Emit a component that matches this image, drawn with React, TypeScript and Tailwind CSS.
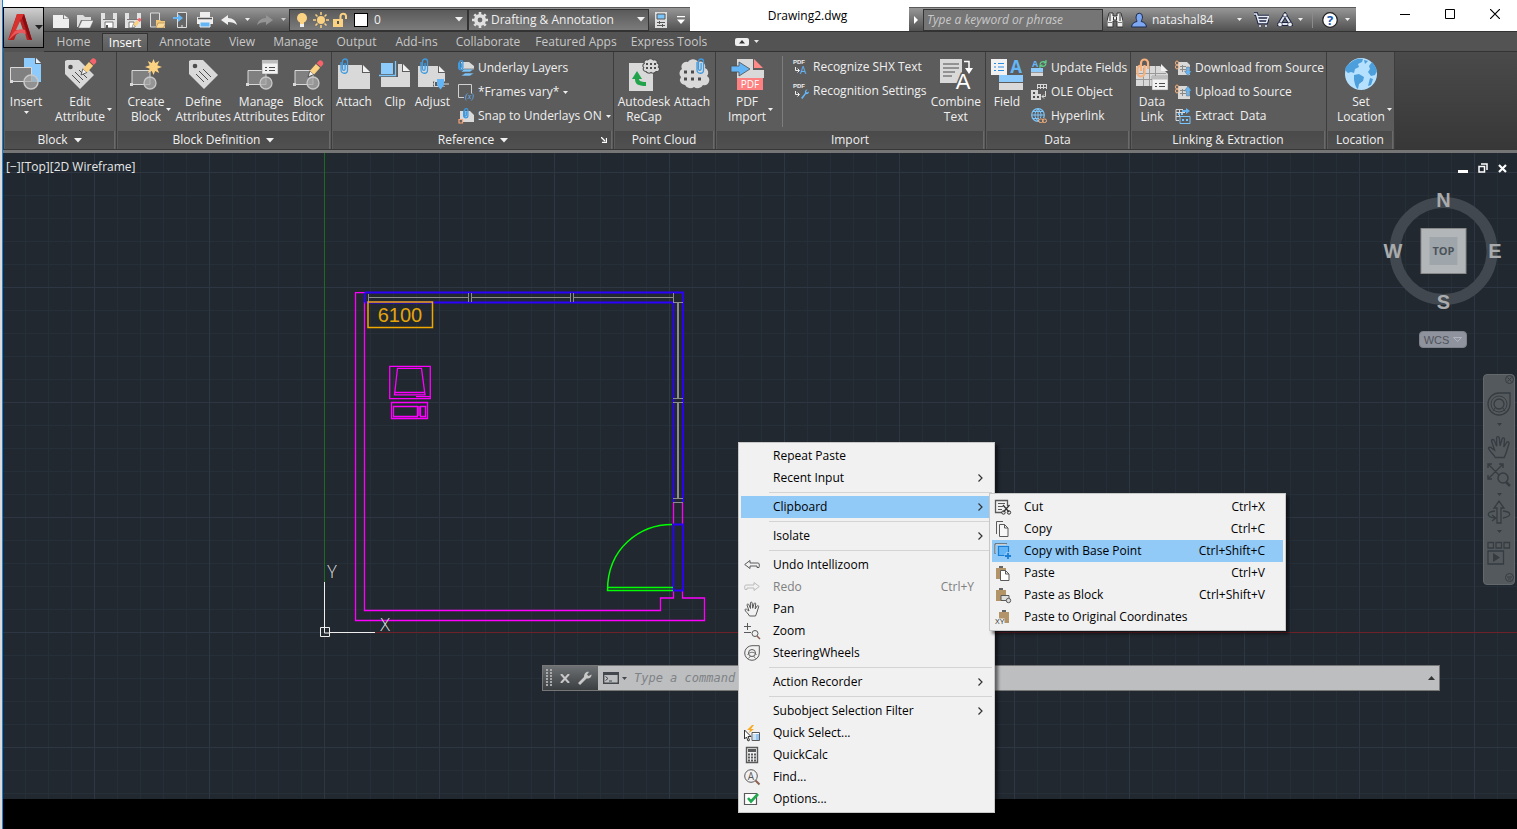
import React from "react";

type Kids = { children?: React.ReactNode };

function Svg({ w, h, children, className = "" }: { w: number; h: number; className?: string } & Kids) {
  return (
    <svg width={w} height={h} viewBox={`0 0 ${w} ${h}`} fill="none" aria-hidden="true" className={`block shrink-0 ${className}`}>
      {children}
    </svg>
  );
}

function Caret({ big = false, className = "" }: { big?: boolean; className?: string }) {
  return big ? (
    <Svg w={8} h={5} className={className}><path d="M0 0h8L4 4.5z" fill="currentColor" /></Svg>
  ) : (
    <Svg w={5} h={3} className={className}><path d="M0 0h5L2.500 3z" fill="currentColor" /></Svg>
  );
}

/* ---------- shared drawing parts ---------- */

const L = "#d9d9d9";
const D = "#4d4d4d";
const B = "#7cc5fb";

function Pencil({ x, y, s = 1 }: { x: number; y: number; s?: number }) {
  return (
    <g transform={`translate(${x} ${y}) rotate(42) scale(${s})`}>
      <path d="M0 0L-2.800-6h5.600z" fill="#f2f2f2" stroke={D} strokeWidth=".8" />
      <path d="M-2.800-6h5.600v-9h-5.600z" fill="#fbd182" />
      <path d="M-2.800-16h5.600v-2.500a2.800 2.800 0 0 0-5.600 0z" fill="#f7636a" />
    </g>
  );
}

function Clip({ x, y, s = 1 }: { x: number; y: number; s?: number }) {
  return (
    <path
      transform={`translate(${x} ${y}) scale(${s})`}
      d="M1 4v8a3.200 3.200 0 0 0 6.500 0V3.500a2.500 2.500 0 0 0-5 0V11a1.300 1.300 0 0 0 2.600 0V5"
      stroke="#3f9ae0"
      strokeWidth={1.3 / s}
    />
  );
}

function Shape() {
  return (
    <>
      <path d="M2 12.500h18v14H2z" fill="#808080" stroke={L} />
      <circle cx="20" cy="25" r="6" fill="#a8a8a8" fillOpacity=".75" stroke="#c8c8c8" strokeWidth="1.300" />
      <path d="M0 25h3v3H0z" fill={L} />
    </>
  );
}

const tagPath = "M1 3l2-1h12l15 15-14 14L1 16z";
const cloud = "M5 11a5 5 0 0 1 6-7 6 6 0 0 1 10 0 5 5 0 0 1 7 6 5 5 0 0 1 2 8 5 5 0 0 1-4 9 6 6 0 0 1-9 2 6 6 0 0 1-9-2 5 5 0 0 1-4-8 5 5 0 0 1 1-8z";
const handPath =
  "M5.500 15C4 12 1.200 10.500 1 8.800c0-1 1.500-1 2.200 0L5 10 3 4c0-1.300 1.500-1.300 1.900-.2L6.500 7.500 6.400 2c0-1.200 1.700-1.200 1.800 0L8.700 7.200l1.400-4.700c.4-1 1.800-.7 1.600.4L11.200 8l1.900-3c.6-.9 1.900-.3 1.600.7L12.700 12 11.500 15z";

function WindowList({ x, y, w = 16, h = 14 }: { x: number; y: number; w?: number; h?: number }) {
  return (
    <g transform={`translate(${x} ${y})`}>
      <path d={`M0 0h${w}v${h}H0z`} fill="#f2f2f2" stroke="#777" strokeWidth=".5" />
      <path d={`M0 0h${w}v3.500H0z`} fill="#bdbdbd" />
      <path d="M3 7.500h2M3 10.500h2M7 7.500h6M7 10.500h6" stroke={D} />
    </g>
  );
}

/* ---------- large ribbon icons (32 x 32) ---------- */

const big: Record<string, React.ReactNode> = {
  insert: (
    <>
      <path d="M14 0h11v6h6v18H14z" fill="#8ccbfb" />
      <path d="M26 0l5 5h-5z" fill="#e8f4ff" />
      <path d="M.500 9.500h21v14H.500z" fill="#808080" stroke={L} />
      <circle cx="21" cy="24" r="7" fill="#a8a8a8" fillOpacity=".7" stroke="#c8c8c8" strokeWidth="1.500" />
      <path d="M0 22h3v3H0z" fill={L} />
    </>
  ),
  editAttr: (
    <>
      <path d={tagPath} fill={L} />
      <circle cx="6.500" cy="9" r="2.300" fill={D} />
      <path d="M8 17l8 8M11 14l8 8M15 12l8 8" stroke={D} />
      <Pencil x={17} y={17} />
    </>
  ),
  create: (
    <>
      <Shape />
      <path d="M23.500 1l1.700 4 4-2-1.900 4.200 4.700 1.800-4.700 1.800 1.900 4.200-4-2-1.700 4-1.700-4-4 2 1.900-4.200L15 9l4.700-1.800L17.800 3l4 2z" fill="#fbd182" />
    </>
  ),
  define: (
    <>
      <path d={tagPath} fill={L} />
      <circle cx="7" cy="8" r="2.300" fill={D} />
      <path d="M8 16l8 8M11 13l9 9M15 11l8 8" stroke={D} />
    </>
  ),
  manage: (
    <>
      <Shape />
      <WindowList x={16} y={2} />
    </>
  ),
  editor: (
    <>
      <Shape />
      <Pencil x={15} y={19} />
    </>
  ),
  attach: (
    <>
      <path d="M0 7h24v8h8v16H0z" fill={L} />
      <path d="M25 7l7 7h-7z" fill="#f2f2f2" />
      <Clip x={2} y={0} s={1} />
    </>
  ),
  clip: (
    <>
      <path d="M2 6h21v8h8v15H2z" fill={L} />
      <path d="M24 6l7 7h-7z" fill="#f2f2f2" />
      <path d="M-1 3h20v16H-1z" fill="#5c5c5c" />
      <path d="M2 5h12v11H2z" fill="#8ccbfb" />
      <path d="M0 17.500h16.500V3" stroke={B} strokeWidth="1.300" />
    </>
  ),
  adjust: (
    <>
      <path d="M1 8h20v7h7v14H1z" fill={L} />
      <path d="M22 8l6 6h-6z" fill="#f2f2f2" />
      <Clip x={3} y={0} s={1} />
      <path d="M16 26h16" stroke="#5c5c5c" strokeWidth="5" />
      <path d="M16 26h16" stroke={L} />
      <path d="M17.500 23.500h4v5h-4z" fill="#5c5c5c" stroke={L} />
      <path d="M20 21h7v6l-3.500 4.500L20 27z" fill="#64b5f6" />
    </>
  ),
  recap: (
    <>
      <path d="M1 5h24v28H1z" fill={L} />
      <path d="M9 13l-5 8h3c0 5 3 7 11 7v-4c-5 0-7-1-7-3h3z" fill="#21a34c" />
      <g transform="translate(13.500 0) scale(.56 .5)"><path d={cloud} fill={L} stroke={D} strokeWidth="2" /></g>
      <path d="M18 6h2M22 6h2M26 6h2M18 10h2M22 10h2M26 10h2" stroke={D} strokeWidth="2" />
    </>
  ),
  cloud: (
    <>
      <path d={cloud} fill={L} />
      <path d="M7 14h3M14 14h3M7 21h3M14 21h3M21 21h3" stroke={D} strokeWidth="3" />
      <Clip x={19} y={0} s={1} />
    </>
  ),
  pdf: (
    <>
      <path d="M6 1h16v11h11v8H6z" fill={L} />
      <path d="M23 1l9 9h-9z" fill="#ff8a8a" />
      <path d="M0 8h8V4l11 7-11 7v-4H0z" fill="#64b5f6" stroke={D} strokeWidth=".8" />
      <path d="M6 20h26v12H6z" fill="#ff8080" />
      <text x="19" y="30" textAnchor="middle" fill="#fff" fontSize="10" className="font-['Open_Sans']">PDF</text>
    </>
  ),
  combine: (
    <>
      <path d="M0 1h22v24H0z" fill={L} />
      <path d="M3 6h16M3 10h16M3 14h12M3 18h9" stroke={D} />
      <path d="M24 3.500h5V10" stroke="#fff" strokeWidth="1.500" />
      <path d="M25 10h8l-4 6z" fill="#fff" />
      <text x="23" y="31" textAnchor="middle" fill="#fff" stroke="#5c5c5c" strokeWidth="3" paintOrder="stroke" fontSize="22" className="font-['Liberation_Sans']">A</text>
    </>
  ),
  field: (
    <>
      <path d="M0 1h16v16H0z" fill="#f2f2f2" />
      <path d="M3 5.500h2M3 9h2M3 12.500h2M7 5.500h6M7 9h6M7 12.500h6" stroke="#2a8be0" />
      <path d="M8 17h24v7H8z" fill="#8ccbfb" />
      <path d="M8 25h24v7H8z" fill={L} />
      <text x="25" y="15" textAnchor="middle" fill="#64b5f6" fontSize="17" fontWeight="700" className="font-['Open_Sans']">A</text>
    </>
  ),
  dataLink: (
    <>
      <path d="M0 8h24l8 8v12H0z" fill={L} />
      <path d="M25 6l7 7h-7z" fill="#f2f2f2" />
      <path d="M0 15.500h30M0 21.500h30M7.500 10v18M13.500 8v20M19.500 8v12" stroke="#999" />
      <path d="M5 13V5a3.500 3.500 0 0 1 7 0v6M1.500 9.500V15a3.500 3.500 0 0 0 7 0V7M5 7.500C2.500 8 1.500 9 1.500 11" stroke="#f7b27e" strokeWidth="2.200" />
      <WindowList x={16} y={18} />
    </>
  ),
  globe: (
    <>
      <circle cx="16" cy="16" r="16" fill="#b5e1ff" />
      <path d="M5 5C9 1 14 0 18 1l-1 3-4 2 1 3-4 2-1 4-3-1-3 1-3-3c0-3 2-5 5-7z" fill="#4d9fdc" />
      <path d="M9 17l5-1 5 3-1 4-4 3-1 5c-3-2-3-6-4-9z" fill="#4d9fdc" />
      <path d="M24 8l3-4c3 3 4 6 5 9l-2 4-4 1-3-4 2-3z" fill="#4d9fdc" />
      <path d="M25 20l3 1-2 6-3 1z" fill="#4d9fdc" />
      <path d="M19 2l4 1-3 3z" fill="#4d9fdc" />
    </>
  ),
};

/* ---------- small ribbon icons (16 x 16) ---------- */

const sheet = "M3 2h9l3 3v10H3z";
const small: Record<string, React.ReactNode> = {
  layers: (
    <>
      <path d="M5 2h6l5 4v4H3V2z" fill={L} />
      <path d="M6 9h10l-4 3H3zM7 13h9l-4 3H3z" fill={B} stroke="#5c5c5c" strokeWidth=".6" />
      <Clip x={0} y={0} s={0.65} />
    </>
  ),
  frames: (
    <>
      <path d="M.500.500h13v9M.500.500v13H6" stroke="#d0d0d0" />
      <text x="7" y="15" fontSize="8" fontStyle="italic" fill="#64b5f6" className="font-['Liberation_Serif']">(x)</text>
    </>
  ),
  snap: (
    <>
      <path d="M2 3h10l4 4v7H2z" fill={L} />
      <Clip x={5} y={0} s={0.65} />
      <path d="M1 11.500h3.500v3.500H1z" fill="#5c5c5c" stroke="#f7a377" strokeWidth="1.200" />
    </>
  ),
  shx: (
    <>
      <text x="0" y="5" fontSize="6" fontWeight="700" fill="#eee" className="font-['Liberation_Sans']">PDF</text>
      <path d="M2.500 8v3.500H6M4.500 9.500l2 2-2 2" stroke="#eee" />
      <text x="7" y="15" fontSize="10" fill="#64b5f6" className="font-['Open_Sans']">A</text>
    </>
  ),
  recog: (
    <>
      <text x="0" y="5" fontSize="6" fontWeight="700" fill="#eee" className="font-['Liberation_Sans']">PDF</text>
      <path d="M2.500 8v3.500H6M4.500 9.500l2 2-2 2" stroke="#eee" />
      <path d="M8 15l4-5c-.6-2 1-4 2.500-3.500L13 8.500l1 1 2-1c0 2-1.500 3-3 2.500L9.500 16z" fill="#64b5f6" />
    </>
  ),
  update: (
    <>
      <text x="1" y="7" fontSize="9" fontWeight="700" fill="#64b5f6" className="font-['Open_Sans']">A</text>
      <path d="M9 4c1-3 5-3 6-1M15 4c-1 3-5 3-6 1M15 0v3h-2.500M9 8V5h2.500" stroke="#5fd38a" strokeWidth="1.200" />
      <path d="M0 8h12v4H0z" fill="#8ccbfb" />
      <path d="M0 12.500h12V16H0z" fill={L} />
    </>
  ),
  ole: (
    <>
      <path d="M0 6h7v10H0z" fill={L} />
      <path d="M6 10h4v6H6z" fill={L} />
      <path d="M2 9h2M2 13h2M6 13h2" stroke={D} strokeWidth="2" />
      <path d="M6 .500h10M6 3.500h10M6.500 0v5M9.500 0v5M12.500 0v5M15.500 0v5" stroke={L} />
      <path d="M14.500 7v5.500H11M13 10.500l-2 2 2 2" stroke={L} />
    </>
  ),
  hyper: (
    <>
      <circle cx="7" cy="7" r="6.300" stroke={B} strokeWidth="1.200" />
      <path d="M7 1v12M1 7h12M2 3.500h10M2 10.500h8M7 1c-4 3-4 9 0 12M7 1c4 3 4 9 0 12" stroke={B} />
      <path d="M8 10h9v6H8z" fill="#5c5c5c" />
      <rect x="7.700" y="11" width="4.500" height="3.500" rx="1.700" stroke="#f7b27e" />
      <rect x="11.500" y="11" width="4" height="3.500" rx="1.700" stroke="#f7b27e" />
    </>
  ),
  download: (
    <>
      <path d={sheet} fill={L} />
      <path d="M5 6.500h6M5 9.500h6M7.500 5v7" stroke="#888" />
      <ellipse cx="2" cy="3" rx="1.500" ry="2" stroke="#f7b27e" /><ellipse cx="2" cy="7" rx="1.500" ry="2" stroke="#f7b27e" />
      <path d="M11.500 7h3v4h2L13 16l-3.500-5h2z" fill="#64b5f6" stroke="#5c5c5c" strokeWidth=".4" />
    </>
  ),
  upload: (
    <>
      <path d={sheet} fill={L} />
      <path d="M5 6.500h5M5 9.500h6M7.500 5v7" stroke="#888" />
      <ellipse cx="2" cy="3" rx="1.500" ry="2" stroke="#f7b27e" /><ellipse cx="2" cy="7" rx="1.500" ry="2" stroke="#f7b27e" />
      <path d="M11.500 12h3V7h2L13 2 9.500 7h2z" fill="#64b5f6" stroke="#5c5c5c" strokeWidth=".4" />
    </>
  ),
  extract: (
    <>
      <path d="M1 12.500V1.500h7M1 4.500h9M1 8.500h4M4.500 2v6M1 12.500h3" stroke={L} />
      <path d="M7 2h4V0l4 3-4 3V4H7z" fill="#64b5f6" />
      <path d="M5 8.500h10v7H5z" stroke={B} />
      <path d="M3 6h2M6 6h2M7 12h2M11 12h2" stroke={B} strokeWidth="2" />
    </>
  ),
};

function BigButton({ icon, lines, width, split, below }: { icon: string; lines: string[]; width: string; split?: boolean; below?: boolean }) {
  return (
    <button type="button" className={`flex shrink-0 flex-col items-center pt-1.5 ${width}`}>
      <svg width="32" height="32" viewBox="0 0 32 32" fill="none" aria-hidden="true" className="block shrink-0 overflow-visible">{big[icon]}</svg>
      <span className="mt-1 grid w-full grid-cols-[1fr_auto_1fr] items-center leading-[15px] whitespace-nowrap">
        <span />
        <span>{lines.map((t) => <span key={t} className="block">{t}</span>)}</span>
        <span className="pl-0.5">{split && <Caret />}</span>
      </span>
      {below && <Caret className="mt-0.5" />}
    </button>
  );
}

function RowButton({ icon, label, drop }: { icon: string; label: string; drop?: boolean }) {
  return (
    <button type="button" className="flex h-6 items-center whitespace-pre">
      <svg width="16" height="16" viewBox="0 0 16 16" fill="none" aria-hidden="true" className="mr-1 block shrink-0 overflow-visible">{small[icon]}</svg>
      {label}
      {drop && <Caret className="ml-1" />}
    </button>
  );
}

function Panel({ title, width, arrow, launcher, children }: { title: string; width: string; arrow?: boolean; launcher?: boolean } & Kids) {
  return (
    <section aria-label={title} className={`flex shrink-0 flex-col border-r border-[#3d3d3d] bg-[#5c5c5c] ${width}`}>
      <div className="flex h-[79px]">{children}</div>
      <div className="mx-px flex h-[18px] items-center justify-center border-r border-[#6a6a6a] bg-linear-to-b from-[#4a4a4a] to-[#505050]">
        {launcher && <span className="w-3" />}
        <button type="button" className="flex flex-1 items-center justify-center gap-1.5">
          {title}
          {arrow && <Caret big />}
        </button>
        {launcher && (
          <button type="button" aria-label={`${title} settings`} className="w-2.5">
            <Svg w={6} h={6}><path d="M0 0l4 4M5.500 1v4.500H1" stroke="#fff" strokeWidth="1.300" /></Svg>
          </button>
        )}
      </div>
    </section>
  );
}

function Ribbon() {
  return (
    <div className="flex border-b-[3px] border-[#757575] bg-linear-to-b from-[#4a4a4a] to-[#373737] pb-px pl-px text-[#f0f0f0]">
      <Panel title="Block" width="w-[113px]" arrow>
        <BigButton icon="insert" lines={["Insert"]} width="w-11" below />
        <BigButton icon="editAttr" lines={["Edit", "Attribute"]} width="w-16" split />
      </Panel>
      <Panel title="Block Definition" width="w-[215px]" arrow>
        <BigButton icon="create" lines={["Create", "Block"]} width="w-[58px]" split />
        <BigButton icon="define" lines={["Define", "Attributes"]} width="w-[58px]" />
        <BigButton icon="manage" lines={["Manage", "Attributes"]} width="w-[58px]" />
        <BigButton icon="editor" lines={["Block", "Editor"]} width="w-9" />
      </Panel>
      <Panel title="Reference" width="w-[282px]" arrow launcher>
        <BigButton icon="attach" lines={["Attach"]} width="w-11" />
        <BigButton icon="clip" lines={["Clip"]} width="w-[38px]" />
        <BigButton icon="adjust" lines={["Adjust"]} width="w-[38px]" />
        <div className="flex flex-col pt-1 pl-1.5">
          <RowButton icon="layers" label="Underlay Layers" />
          <RowButton icon="frames" label="*Frames vary*" drop />
          <RowButton icon="snap" label="Snap to Underlays ON" drop />
        </div>
      </Panel>
      <Panel title="Point Cloud" width="w-[102px]">
        <BigButton icon="recap" lines={["Autodesk", "ReCap"]} width="w-15" />
        <BigButton icon="cloud" lines={["Attach"]} width="w-[38px]" />
      </Panel>
      <Panel title="Import" width="w-[270px]">
        <BigButton icon="pdf" lines={["PDF", "Import"]} width="w-[62px]" split />
        <div className="my-1 ml-1 w-px bg-[#7d7d7d]" />
        <div className="flex w-[146px] flex-col pt-[3px] pl-2.5">
          <RowButton icon="shx" label="Recognize SHX Text" />
          <RowButton icon="recog" label="Recognition Settings" />
        </div>
        <BigButton icon="combine" lines={["Combine", "Text"]} width="w-[54px]" />
      </Panel>
      <Panel title="Data" width="w-[145px]">
        <BigButton icon="field" lines={["Field"]} width="w-[42px]" />
        <div className="flex flex-col pt-1 pl-[3px]">
          <RowButton icon="update" label="Update Fields" />
          <RowButton icon="ole" label="OLE Object" />
          <RowButton icon="hyper" label="Hyperlink" />
        </div>
      </Panel>
      <Panel title="Linking & Extraction" width="w-[196px]">
        <BigButton icon="dataLink" lines={["Data", "Link"]} width="w-[42px]" />
        <div className="flex flex-col pt-1 pl-0.5">
          <RowButton icon="download" label="Download from Source" />
          <RowButton icon="upload" label="Upload to Source" />
          <RowButton icon="extract" label="Extract  Data" />
        </div>
      </Panel>
      <Panel title="Location" width="w-[68px]">
        <BigButton icon="globe" lines={["Set", "Location"]} width="w-[68px]" split />
      </Panel>
    </div>
  );
}

/* ---------- title bar ---------- */

const quick: [string, React.ReactNode][] = [
  ["New", <path key="n" d="M0 3h10v4h6v9H0zM11 3l5 3.500h-5z" fill="#eee" />],
  ["Open", <g key="o"><path d="M0 3h6l2 2h6v3H4L1 15H0z" fill="#ddd" /><path d="M5 8.500h11.500L13 16H1.500z" fill="#eee" stroke="#777" strokeWidth=".5" /></g>],
  ["Save", <g key="s"><path d="M0 1h16v15H0z" fill="#e2e2e2" /><path d="M4 1h8v6H4z" fill="#888" /><path d="M2 7.500h12" stroke="#777" /><path d="M4 10h8v6H4z" fill="#fff" stroke="#777" /><path d="M5 13h2v3H5z" fill="#555" /></g>],
  ["Save As", <g key="a"><path d="M0 1h16v15H0z" fill="#e2e2e2" /><path d="M4 1h8v6H4z" fill="#888" /><path d="M2 7.500h12" stroke="#777" /><path d="M4 10h5v6H4z" fill="#fff" stroke="#777" /><Pencil x={7} y={16} s={0.6} /></g>],
  ["Open from mobile", <g key="m"><path d="M1.500 1h9v14h-9z" fill="#777" stroke="#ddd" /><path d="M7 8h4l1 1h4v7H7z" fill="#f4c777" /><path d="M9 11h8l-3 5H7z" fill="#fbd998" stroke="#6a5530" strokeWidth=".4" /></g>],
  ["Save to mobile", <g key="b"><path d="M4.500.500h9v15h-9z" fill="#666" stroke="#ddd" /><path d="M0 5h5V2l5 4-5 4V7H0z" fill="#64b5f6" /><path d="M8 14h2" stroke="#eee" /></g>],
  ["Plot", <g key="p"><path d="M3 0h10v5H3zM0 5h16v7H0z" fill="#eee" /><path d="M1 6.500h14" stroke="#555" strokeWidth="1.500" /><path d="M3 10h10v5H3z" fill="#64b5f6" stroke="#eee" /></g>],
  ["Undo", <path key="u" d="M0 8l7-5v3c5 0 8 3 9 7-2-2-5-3-9-3v3z" fill="#eee" />],
];

function IconButton({ label, className = "", children }: { label: string; className?: string } & Kids) {
  return <button type="button" aria-label={label} className={`flex shrink-0 items-center justify-center ${className}`}>{children}</button>;
}

const bar = "bg-linear-to-b from-[#979797] to-[#515151] border-t border-[#5a5a5a]";

function TitleBar() {
  return (
    <header className="flex h-[31px] items-stretch bg-white pt-[7px]">
      <div className={`flex w-[646px] shrink-0 items-center pl-[5px] text-[#f0f0f0] ${bar}`}>
        {quick.map(([name, art]) => (
          <IconButton key={name} label={name} className="h-5 w-6"><Svg w={16} h={16}>{art}</Svg></IconButton>
        ))}
        <IconButton label="Undo list" className="h-5 w-3"><Caret /></IconButton>
        <IconButton label="Redo" className="h-5 w-6">
          <Svg w={16} h={16}><path d="M16 8L9 3v3C4 6 1 9 0 13c2-2 5-3 9-3v3z" fill="#959595" /></Svg>
        </IconButton>
        <IconButton label="Redo list" className="h-5 w-3"><Caret className="text-[#ccc]" /></IconButton>
        <label className="flex h-[22px] w-[179px] shrink-0 items-center gap-[3px] border border-[#333] bg-linear-to-b from-[#5a5a5a] to-[#7b7b7b] px-1">
          <Svg w={16} h={16}><circle cx="8" cy="6" r="5" fill="#fbd182" /><path d="M6 10h4v3H6z" fill="#fbd182" /><path d="M6 12h4v3H6z" fill="#eee" /></Svg>
          <Svg w={16} h={16}>
            <circle cx="8" cy="8" r="4" fill="#fbd182" />
            <path d="M8 0v3M8 13v3M0 8h3M13 8h3M2.500 2.500l2 2M11.500 11.500l2 2M13.500 2.500l-2 2M4.500 11.500l-2 2" stroke="#fbd182" strokeWidth="1.500" />
          </Svg>
          <Svg w={16} h={16}><path d="M1 7h10v8H1z" fill="#fbd182" /><path d="M8.500 7V4a2.800 2.800 0 0 1 5.500 0v3" stroke="#fbd182" strokeWidth="2" /><path d="M6 9v3" stroke="#555" strokeWidth="2" /></Svg>
          <span className="mx-[3px] size-[14px] shrink-0 border border-black bg-white" />
          <select aria-label="Layer" className="min-w-0 flex-1 appearance-none bg-transparent text-xs outline-none"><option>0</option></select>
          <Caret big />
        </label>
        <label className="flex h-[22px] w-[181px] shrink-0 items-center gap-[3px] border border-[#333] bg-linear-to-b from-[#5a5a5a] to-[#7b7b7b] px-[3px]">
          <Svg w={16} h={16}>
            <circle cx="8" cy="8" r="4.200" stroke="#e0e0e0" strokeWidth="3.600" />
            <path d="M8 0v3M8 13v3M0 8h3M13 8h3M2.300 2.300l2 2M11.700 11.700l2 2M13.700 2.300l-2 2M4.300 11.700l-2 2" stroke="#e0e0e0" strokeWidth="2.600" />
          </Svg>
          <select aria-label="Workspace" className="min-w-0 flex-1 appearance-none bg-transparent text-xs outline-none"><option>Drafting &amp; Annotation</option></select>
          <Caret big />
        </label>
        <IconButton label="Properties" className="h-5 w-6">
          <Svg w={12} h={16}><path d="M0 0h12v16H0z" fill="#ddd" /><path d="M2 2h8v5H2z" fill="#7cc5fb" stroke="#555" /><path d="M2 10.500h8M2 13.500h8M4.500 9v3M7.500 12v3" stroke="#555" /></Svg>
        </IconButton>
        <IconButton label="Customize" className="h-5 w-4"><Svg w={8} h={8}><path d="M0 .500h8" stroke="#fff" strokeWidth="1.500" /><path d="M0 3.500h8L4 8z" fill="#fff" /></Svg></IconButton>
      </div>

      <h1 className="-mt-[7px] flex flex-1 items-center justify-center pl-4 text-xs text-black">Drawing2.dwg</h1>

      <div className={`flex w-[447px] shrink-0 items-center text-[#f0f0f0] ${bar}`}>
        <IconButton label="Collapse search" className="h-5 w-3.5"><Svg w={4} h={8}><path d="M0 0l4 4-4 4z" fill="#fff" /></Svg></IconButton>
        <input aria-label="Search" placeholder="Type a keyword or phrase" className="h-[22px] w-[180px] shrink-0 border border-[#333] bg-[#757575] px-[3px] text-xs italic outline-none placeholder:text-[#c9c9c9]" />
        <IconButton label="Find" className="h-5 w-6">
          <Svg w={16} h={16}>
            <path d="M2 1h4v3h4V1h4l2 8v6h-6V9H6v6H0V9z" fill="#eee" stroke="#333" />
            <path d="M3 2v7M13 2v7M6.500 5v3h3V5" stroke="#333" /><path d="M1 10.500h4M11 10.500h4" stroke="#777" />
          </Svg>
        </IconButton>
        <button type="button" className="flex h-5 w-[115px] shrink-0 items-center pl-1">
          <Svg w={16} h={16}><path d="M5 5a3 3.500 0 0 1 6.500 0c0 2-1 3-1.300 4.500 3 .5 4.800 2 5.300 5.500H.500C1 11.500 3 10 6 9.500 5.800 8 5 7 5 5z" fill="#7da7f0" stroke="#1c2b4d" /></Svg>
          <span className="ml-[5px] flex-1 text-left">natashal84</span>
          <Caret />
        </button>
        <IconButton label="Store" className="ml-1.5 h-5 w-[26px]">
          <Svg w={16} h={16}><path d="M1 2h2.500L6 10.500h7.500L15.500 4.500H4.500M6 8h8.500" stroke="#1c2440" strokeWidth="3.500" /><path d="M1 2h2.500L6 10.500h7.500L15.500 4.500H4.500M5 7.500h9" stroke="#e8ecf5" strokeWidth="1.500" /><circle cx="7" cy="14" r="1.500" fill="#eee" stroke="#1c2440" strokeWidth=".6" /><circle cx="13" cy="14" r="1.500" fill="#eee" stroke="#1c2440" strokeWidth=".6" /></Svg>
        </IconButton>
        <IconButton label="Connect" className="h-5 w-[22px]">
          <Svg w={16} h={16}><path d="M8 3l5.500 9h-11z" stroke="#1c2440" strokeWidth="4" /><path d="M8 3l5.500 9h-11z" stroke="#dfe5f2" strokeWidth="2" /><circle cx="8" cy="3" r="2" fill="#eee" stroke="#1c2440" strokeWidth=".7" /><circle cx="13" cy="12.500" r="2.300" fill="#eee" stroke="#1c2440" strokeWidth=".7" /><circle cx="3" cy="12.500" r="2.300" fill="#eee" stroke="#1c2440" strokeWidth=".7" /></Svg>
        </IconButton>
        <IconButton label="Connect options" className="h-5 w-2"><Caret /></IconButton>
        <span className="ml-2 h-4 w-px bg-[#8a8a8a]" />
        <IconButton label="Help" className="ml-2 h-5 w-[18px]">
          <Svg w={16} h={16}><circle cx="8" cy="8" r="7.300" fill="#fff" stroke="#222" strokeWidth="1.300" /><text x="8" y="12.500" textAnchor="middle" fontSize="13" fontWeight="700" fill="#1558b0" className="font-['Open_Sans']">?</text></Svg>
        </IconButton>
        <IconButton label="Help options" className="h-5 w-[17px]"><Caret /></IconButton>
      </div>

      <div className="-mt-[7px] ml-[26px] flex h-[31px] shrink-0 text-black">
        <IconButton label="Minimize" className="h-7 w-[45px]"><Svg w={10} h={10}><path d="M0 5.500h10" stroke="currentColor" /></Svg></IconButton>
        <IconButton label="Maximize" className="h-7 w-[45px]"><Svg w={10} h={10}><path d="M.500.500h9v9h-9z" stroke="currentColor" /></Svg></IconButton>
        <IconButton label="Close" className="h-7 w-[45px]"><Svg w={10} h={10}><path d="M0 0l10 10M10 0L0 10" stroke="currentColor" strokeWidth="1.200" /></Svg></IconButton>
      </div>
    </header>
  );
}

const tabs: [string, string][] = [
  ["Home", "w-[57px]"],
  ["Insert", "w-[46px]"],
  ["Annotate", "w-[74px]"],
  ["View", "w-10"],
  ["Manage", "w-[67px]"],
  ["Output", "w-[55px]"],
  ["Add-ins", "w-[65px]"],
  ["Collaborate", "w-[78px]"],
  ["Featured Apps", "w-[98px]"],
  ["Express Tools", "w-[88px]"],
];

function TabBar() {
  return (
    <nav className="flex h-[21px] items-end border-t border-b border-t-[#333] border-b-[#333] bg-[#535353] pl-[1px]">
      {tabs.map(([name, width]) => (
        <button
          key={name}
          type="button"
          className={
            name === "Insert"
              ? `h-[18px] shrink-0 border-x border-t border-[#333] bg-linear-to-b from-[#6f6f6f] to-[#5c5c5c] leading-[14px] text-white ${width}`
              : `h-[19px] shrink-0 leading-[17px] whitespace-nowrap text-[#c8c8c8] ${width}`
          }
        >
          {name}
        </button>
      ))}
      <IconButton label="Minimize ribbon" className="ml-[22px] h-[19px] gap-[5px] text-[#e6e6e6]">
        <Svg w={14} h={8}><rect width="14" height="8" rx="2" fill="#eee" /><path d="M4 5.500h6L7 2z" fill="#333" /></Svg>
        <Caret />
      </IconButton>
    </nav>
  );
}

function AppButton() {
  return (
    <button type="button" aria-label="Application menu" className="row-span-2 mt-[7px] mb-1 flex items-center gap-[3px] border border-black bg-linear-to-b from-[#cfcfcf] to-[#6a6a6a] pl-1 text-[#222]">
      <Svg w={24} h={30}>
        <path d="M9 1h7l8 26h-5l-2-7c-4-1-7 0-9 2l-2 5H0z" fill="#b3201f" />
        <path d="M9 1h7l-1 4-3 2-5 15-6 5z" fill="#d8322f" />
        <path d="M12 8l3 9H8z" fill="#a9a9a9" />
        <path d="M7 18c4-2 8-2 10-1l1 4c-5-2-9-1-12 1-2 1-3 3-6 5z" fill="#e8585c" />
        <path d="M16 1l8 26-3-1L14 5z" fill="#8a0c12" />
      </Svg>
      <Caret big />
    </button>
  );
}

/* ---------- drawing area ---------- */

function Drawing() {
  const m = "#f0f";
  const b = "#2c00ff";
  const g = "#8c8c8c";
  return (
    <svg aria-label="Floor plan" className="absolute inset-0 size-full" fill="none">
      <defs>
        <pattern id="minor" x="22" y="19" width="23" height="23" patternUnits="userSpaceOnUse">
          <path d="M.500 0v23M0 .500h23" stroke="#262e38" />
        </pattern>
        <pattern id="major" x="91" y="19" width="115" height="115" patternUnits="userSpaceOnUse">
          <path d="M.500 0v115M0 .500h115" stroke="#2f3643" />
        </pattern>
      </defs>
      <rect width="100%" height="100%" fill="url(#minor)" />
      <rect width="100%" height="100%" fill="url(#major)" />
      <g transform="translate(-3 -153)">
        <path d="M324.500 153v430" stroke="#1b6b22" />
        <path d="M375 632.500h1200" stroke="#6d2128" />
        <g stroke={m} strokeWidth="1.300">
          <path d="M365 292.700h-9.500v327.800H704.500v-22.500h-22v-7.500M364.500 302v308.500h296V598h13v-7.500M673.500 502v22M682.500 502v22" />
          <path d="M389.700 366.300h40.600v32.400h-40.600zM397.500 368.300h24l3.500 26.500h-30.500zM395 392.500h29M416 396.700h14M391.500 402.500h36v16h-36zM393.500 406.500h24v10h-24zM419 406v10M420.500 406.500h5v10h-5z" />
        </g>
        <g stroke={b} strokeWidth="1.800">
          <path d="M364.500 292.500h318.500v209.500M364.500 302.500h309M364.500 293v9M673.500 302v200M673.500 524.500h9.500v66h-9.500z" />
        </g>
        <g stroke={g}>
          <path d="M368.500 297.500h100M472 297.500h98M574 297.500h99M368.500 294v8M468.500 293v9M471.500 293v9M570.500 293v9M573.500 293v9M673.500 293v9" />
          <path d="M673 302.500h10M673 398.500h10M673 402.500h10M673 498.500h10M673 502.500h10" />
          <path d="M678 303v95M678 403v95" strokeWidth="2" />
        </g>
        <path d="M672 524.500C640 524.500 607.500 548 607.500 590.500H673M608 587.500h65" stroke="#0f0" strokeWidth="1.500" />
        <path d="M368 302h64.500v25.500H368z" stroke="#f0a800" strokeWidth="1.500" />
        <text x="400" y="322" textAnchor="middle" fontSize="20" fill="#e5a50a" className="font-['Liberation_Sans',sans-serif]">6100</text>
        <g stroke="#eee">
          <path d="M324.500 582v45M329 632.500h46M320.500 627.500h9v9h-9zM324.500 627v6h5" />
        </g>
        <g fill="#ddd" fontSize="18" className="font-['Open_Sans',sans-serif]" fontWeight="300" textAnchor="middle">
          <text x="332" y="578">Y</text>
          <text x="385" y="631">X</text>
        </g>
      </g>
    </svg>
  );
}

function ViewCube() {
  return (
    <div className="absolute top-9 right-3.5 flex w-[120px] flex-col items-center">
      <svg width="120" height="124" viewBox="0 0 120 124" className="block" aria-label="View cube">
        <circle cx="60.500" cy="62" r="48.500" fill="none" stroke="#42484f" strokeWidth="11" />
        <rect x="38" y="39.500" width="45" height="45" fill="#b3b6b8" stroke="#888" />
        <rect x="46.500" y="48" width="28" height="28" fill="#9ea6ac" />
        <g fill="#a9abad" fontSize="20" fontWeight="700" textAnchor="middle" className="font-['Liberation_Sans',sans-serif]">
          <text x="60.500" y="18">N</text>
          <text x="60.500" y="120">S</text>
          <text x="10" y="69">W</text>
          <text x="112" y="69">E</text>
        </g>
        <text x="60.500" y="66" textAnchor="middle" fontSize="11" fontWeight="700" fill="#4c5359" className="font-['Open_Sans',sans-serif]">TOP</text>
      </svg>
      <button type="button" className="mt-[18px] flex h-[17px] w-12 items-center justify-center gap-1 rounded border border-[#7d8189] bg-[#8f939e] font-['Liberation_Sans',sans-serif] text-[11px] text-[#50545c]">
        WCS
        <Svg w={9} h={5}><path d="M.500.500h8l-4 4z" stroke="#b0b4bc" /></Svg>
      </button>
    </div>
  );
}

function NavBar() {
  return (
    <div className="absolute top-[221px] right-0.5 flex w-8 flex-col items-center rounded border border-[#62686c] bg-[#53595d] text-[#363c41]">
      <IconButton label="Close navigation bar" className="ml-5"><Svg w={9} h={9}><circle cx="4.500" cy="4.500" r="4" stroke="currentColor" /><path d="M2.500 2.500l4 4M6.500 2.500l-4 4" stroke="currentColor" /></Svg></IconButton>
      <IconButton label="Steering wheel" className="mt-2"><Svg w={24} h={24}><path d="M12 1h11v11a11 11 0 1 1-11-11z" stroke="currentColor" strokeWidth="1.300" /><circle cx="12" cy="12" r="8" stroke="currentColor" /><circle cx="12" cy="12" r="5" stroke="currentColor" strokeWidth="1.300" /><path d="M8 16l-2 3M16 16l2 3" stroke="currentColor" /></Svg></IconButton>
      <Caret className="mt-[7px]" />
      <IconButton label="Pan view" className="mt-2"><svg width="24" height="26" viewBox="0 0 16 16" fill="none" aria-hidden="true"><path d={handPath} stroke="currentColor" strokeWidth=".9" /></svg></IconButton>
      <IconButton label="Zoom extents" className="mt-[3px]">
        <Svg w={24} h={24}><path d="M1 1l15 15M16 1L1 16M1 5V1h4M12 1h4v4M1 12v4h4" stroke="currentColor" strokeWidth="1.400" /><circle cx="16" cy="15" r="5" fill="#53595d" stroke="currentColor" strokeWidth="1.500" /><path d="M19 19l4 4" stroke="currentColor" strokeWidth="2.500" /></Svg>
      </IconButton>
      <Caret className="mt-1.5" />
      <IconButton label="Orbit" className="mt-1">
        <Svg w={24} h={24}><path d="M10 23V8H7l5-7 5 7h-3v15z" stroke="currentColor" strokeWidth="1.300" /><path d="M8 11c-9 1-9 6 0 7M16 11c9 1 9 5 0 7M5 15l4 3-4 3" stroke="currentColor" strokeWidth="1.300" /></Svg>
      </IconButton>
      <Caret className="mt-1.5" />
      <IconButton label="Show motion" className="mt-2">
        <Svg w={24} h={24}><path d="M1 1.500h5.500V7H1zM9 1.500h5.500V7H9zM17 1.500h5.500V7H17zM1 10h15.500v13H1z" stroke="currentColor" strokeWidth="1.300" /><path d="M6 12l7 4.500L6 21z" fill="currentColor" /></Svg>
      </IconButton>
      <IconButton label="Navigation bar options" className="mt-2 mb-0.5 ml-5"><Svg w={9} h={9}><circle cx="4.500" cy="4.500" r="4" stroke="currentColor" /><path d="M2 4h5M3 6h3" stroke="currentColor" /></Svg></IconButton>
    </div>
  );
}

function CommandLine() {
  return (
    <form className="absolute top-[512px] right-[77px] left-[539px] flex h-[26px] items-center border border-[#777] bg-[#bcbec0]" onSubmit={(e) => e.preventDefault()}>
      <div className="flex h-full w-[55px] shrink-0 items-center justify-between bg-linear-to-b from-[#6e7174] to-[#3c3f42] pr-1.5 pl-[3px] text-[#c8c8c8]">
        <Svg w={6} h={18}>{[0, 3, 6, 9, 12, 15].map((y) => <path key={y} d={`M0 ${y + 1}h2M4 ${y + 1}h2`} stroke="#aaa" strokeWidth="2" />)}</Svg>
        <IconButton label="Close command line"><Svg w={10} h={9}><path d="M1 0l8 9M9 0L1 9" stroke="currentColor" strokeWidth="2" /></Svg></IconButton>
        <IconButton label="Command settings"><Svg w={14} h={14}><path d="M0 12l6-6C6 3 8 0 11 1L9 3.500l1.500 1.500L13.500 3.500C14 6 11 8 8.500 7.500L2 14z" fill="currentColor" /></Svg></IconButton>
      </div>
      <IconButton label="Recent commands" className="ml-[5px] gap-[3px] text-[#44484c]">
        <Svg w={16} h={12}><path d="M.700.700h14.600v10.600H.700z" stroke="currentColor" strokeWidth="1.400" /><path d="M0 2h16" stroke="currentColor" strokeWidth="2" /><path d="M2.500 4.500l2.500 2-2.500 2M6 9h3" stroke="currentColor" /></Svg>
        <Caret />
      </IconButton>
      <input aria-label="Command" placeholder="Type a command" className="ml-[7px] min-w-0 flex-1 bg-transparent font-['DejaVu_Sans_Mono',monospace] text-xs italic outline-none placeholder:text-[#7f8285]" />
      <IconButton label="Command history" className="h-full w-4"><Svg w={7} h={4}><path d="M0 4h7L3.500 0z" fill="#333" /></Svg></IconButton>
    </form>
  );
}

/* ---------- context menus ---------- */

const K = "#5a5a5a";
const board = "M1 3h3V1.500h4V3h3v11H1z";
const menuArt: Record<string, React.ReactNode> = {
  undo: <path d="M.700 7.500L6 3.500V6h8.500c1 1 1 3 .5 4.500H13V9H6v2.500z" stroke={K} />,
  redo: <path d="M15.300 7.500L10 3.500V6H1.500c-1 1-1 3-.5 4.500H3V9h7v2.500z" stroke="#bbb" />,
  pan: <path d={handPath} stroke={K} />,
  zoom: <><path d="M3.500 0v7M0 3.500h7M0 9.500h7" stroke={K} /><circle cx="11" cy="10.500" r="3" stroke={K} /><path d="M13 13l3 3" stroke="#8b6250" strokeWidth="1.500" /></>,
  wheel: <><path d="M8 .700h7.300V8A7.300 7.300 0 1 1 8 .700z" stroke={K} /><circle cx="8" cy="8" r="3.500" stroke={K} /><path d="M4.500 13.500l2-2.500M11.500 13.500l-2-2.500M3.500 10a5 5 0 0 1 9 0" stroke={K} strokeWidth=".8" /></>,
  select: <><path d="M8 0L3 5h3L5 8l5-4H7l3-4z" fill="#f7a922" /><path d="M.500 5v9l2-2 1.500 4 1.500-.7L4 11.500h3z" fill="#fff" stroke="#333" /><path d="M8 7.500h7.500v8H8z" fill="#fff" stroke={K} /><path d="M9.500 10h1M9.500 12h1M9.500 14h1M11.500 10H15M11.500 12H15M11.500 14H15" stroke="#2a8be0" /></>,
  calc: <><path d="M2.500.500h11v15h-11z" stroke={K} strokeWidth="1.400" /><path d="M4 2h8v3H4z" fill={K} /><path d="M4 7.500h2M7 7.500h2M10 7.500h2M4 10.500h2M7 10.500h2M10 10.500h2M4 13.500h2M7 13.500h2M10 13.500h2" stroke={K} strokeWidth="1.800" /></>,
  find: <><circle cx="7" cy="7" r="6.300" stroke={K} /><text x="7" y="10.500" textAnchor="middle" fontSize="10" fill={K} className="font-['Open_Sans']">A</text><path d="M11.500 11.500l4 4" stroke="#8b6250" strokeWidth="2" /></>,
  options: <><path d="M.500 2.500h12v11H.500z" fill="#fff" stroke={K} strokeWidth="1.200" /><path d="M4 7l3 3.500L14 3" stroke="#22a84f" strokeWidth="2.600" /></>,
  cut: <><path d="M12.500 7V1.500h-12v12H7" stroke={K} strokeWidth="1.300" /><path d="M3 4.500h7M3 7.500h5M3 10.500h4" stroke={K} /><path d="M8 6l6 7M14.500 6l-6 7" stroke="#333" strokeWidth="1.300" /><circle cx="8.500" cy="13.500" r="1.700" stroke="#333" /><circle cx="14" cy="13.500" r="1.700" stroke="#333" /></>,
  copy: <><path d="M1.500 13V.500H8" stroke={K} /><path d="M4.500 3.500h5l3.500 3.500v8.500H4.500zM9.500 3.500V7H13" fill="#f7f7f7" stroke={K} /></>,
  base: <><path d="M.500 10V1.500h11" stroke="#fff" /><path d="M0 11V.800h12" stroke={K} /><path d="M3.500 3.500h10v9h-10z" fill="#64b5f6" stroke="#1b7fd6" strokeWidth="1.200" /><path d="M9.500 12.500h7M13 9v7" stroke="#90c8f6" strokeWidth="4" /><path d="M10 13h6M13 10v6" stroke="#1b7fd6" strokeWidth="1.800" /></>,
  paste: <><path d={board} fill="#b39468" /><path d="M4 1h4v2H4z" fill="#666" /><path d="M5.500 5.500h5l3.500 3.500v6.500H5.500zM10.500 5.500V9H14" fill="#fff" stroke={K} /></>,
  pasteBlock: <><path d={board} fill="#b39468" /><path d="M4 1h4v2H4z" fill="#666" /><path d="M6 8.500h8v5H6z" fill="#ddd" stroke={K} /><circle cx="13.500" cy="13.500" r="2.200" fill="#ddd" stroke={K} /></>,
  pasteXY: <><path transform="translate(3 0)" d={board} fill="#b39468" /><path d="M7 1h4v2H7z" fill="#666" /><path d="M0 9.500h9.500V16H0z" fill="#f0f0f0" /><text x="0" y="15" fontSize="7" fill="#333" className="font-['Liberation_Sans']">XY</text></>,
};

type Item = { label: string; icon?: string; keys?: string; sub?: boolean; active?: boolean; disabled?: boolean } | null;

const mainItems: Item[] = [
  { label: "Repeat Paste" },
  { label: "Recent Input", sub: true },
  null,
  { label: "Clipboard", sub: true, active: true },
  null,
  { label: "Isolate", sub: true },
  null,
  { label: "Undo Intellizoom", icon: "undo" },
  { label: "Redo", icon: "redo", keys: "Ctrl+Y", disabled: true },
  { label: "Pan", icon: "pan" },
  { label: "Zoom", icon: "zoom" },
  { label: "SteeringWheels", icon: "wheel" },
  null,
  { label: "Action Recorder", sub: true },
  null,
  { label: "Subobject Selection Filter", sub: true },
  { label: "Quick Select...", icon: "select" },
  { label: "QuickCalc", icon: "calc" },
  { label: "Find...", icon: "find" },
  { label: "Options...", icon: "options" },
];

const clipItems: Item[] = [
  { label: "Cut", icon: "cut", keys: "Ctrl+X" },
  { label: "Copy", icon: "copy", keys: "Ctrl+C" },
  { label: "Copy with Base Point", icon: "base", keys: "Ctrl+Shift+C", active: true },
  { label: "Paste", icon: "paste", keys: "Ctrl+V" },
  { label: "Paste as Block", icon: "pasteBlock", keys: "Ctrl+Shift+V" },
  { label: "Paste to Original Coordinates", icon: "pasteXY" },
];

function Menu({ items, place, label }: { items: Item[]; place: string; label: string }) {
  return (
    <div role="menu" aria-label={label} className={`absolute border border-[#c8c8c8] bg-[#f1f1f1] p-0.5 text-black shadow-[3px_3px_3px_rgba(0,0,0,0.5)] ${place}`}>
      {items.map((it, i) =>
        it === null ? (
          <div key={i} role="separator" className="ml-7 flex h-[7px] items-center"><span className="h-px w-full bg-[#d4d4d4]" /></div>
        ) : (
          <button
            key={it.label}
            type="button"
            role="menuitem"
            disabled={it.disabled}
            className={`flex h-[22px] w-full items-center pl-[3px] text-left ${it.active ? "bg-[#91c9f7]" : ""} ${it.disabled ? "text-[#808080]" : ""}`}
          >
            <span className="mr-[13px] size-4 shrink-0">
              {it.icon && <Svg w={16} h={16} className="overflow-visible">{menuArt[it.icon]}</Svg>}
            </span>
            <span className="flex-1">{it.label}</span>
            <span className="w-fit pr-[18px]">{it.keys}</span>
            {it.sub && <Svg w={5} h={8} className="mr-[9px]"><path d="M.500.500L4 4 .500 7.500" stroke="#333" strokeWidth="1.200" /></Svg>}
          </button>
        )
      )}
    </div>
  );
}

export default function App() {
  return (
    <div className="flex min-h-screen border-l-2 border-[#dcdcdc] bg-black font-['Open_Sans','Segoe_UI',sans-serif] text-xs leading-4">
      <div className="flex min-w-0 flex-1 flex-col border-l border-[#1883d7]">
        <div className="grid grid-cols-[41px_1fr] bg-linear-to-b from-white from-60% to-[#535353] to-60%">
          <AppButton />
          <TitleBar />
          <TabBar />
        </div>
        <Ribbon />
        <main className="relative mb-[30px] flex-1 bg-[#212830]">
          <Drawing />
          <div className="absolute top-1.5 left-[3px] flex text-[#e8e8e8]">
            <button type="button">[−]</button>
            <button type="button">[Top]</button>
            <button type="button">[2D Wireframe]</button>
          </div>
          <div className="absolute top-2.5 right-2.5 flex items-center gap-2.5 text-white">
            <IconButton label="Minimize drawing"><Svg w={10} h={10}><path d="M0 7h10v3H0z" fill="currentColor" /></Svg></IconButton>
            <IconButton label="Restore drawing"><Svg w={10} h={10}><path d="M3 1h6v6M1 3.500h5.500V9H1z" stroke="currentColor" strokeWidth="1.500" /></Svg></IconButton>
            <IconButton label="Close drawing"><Svg w={9} h={9}><path d="M1 1l7 7M8 1L1 8" stroke="currentColor" strokeWidth="2.200" /></Svg></IconButton>
          </div>
          <ViewCube />
          <NavBar />
          <CommandLine />
          <Menu items={mainItems} label="Shortcut menu" place="top-[289px] left-[735px] w-[257px]" />
          <Menu items={clipItems} label="Clipboard" place="top-[340px] left-[986px] w-[297px]" />
        </main>
      </div>
    </div>
  );
}
